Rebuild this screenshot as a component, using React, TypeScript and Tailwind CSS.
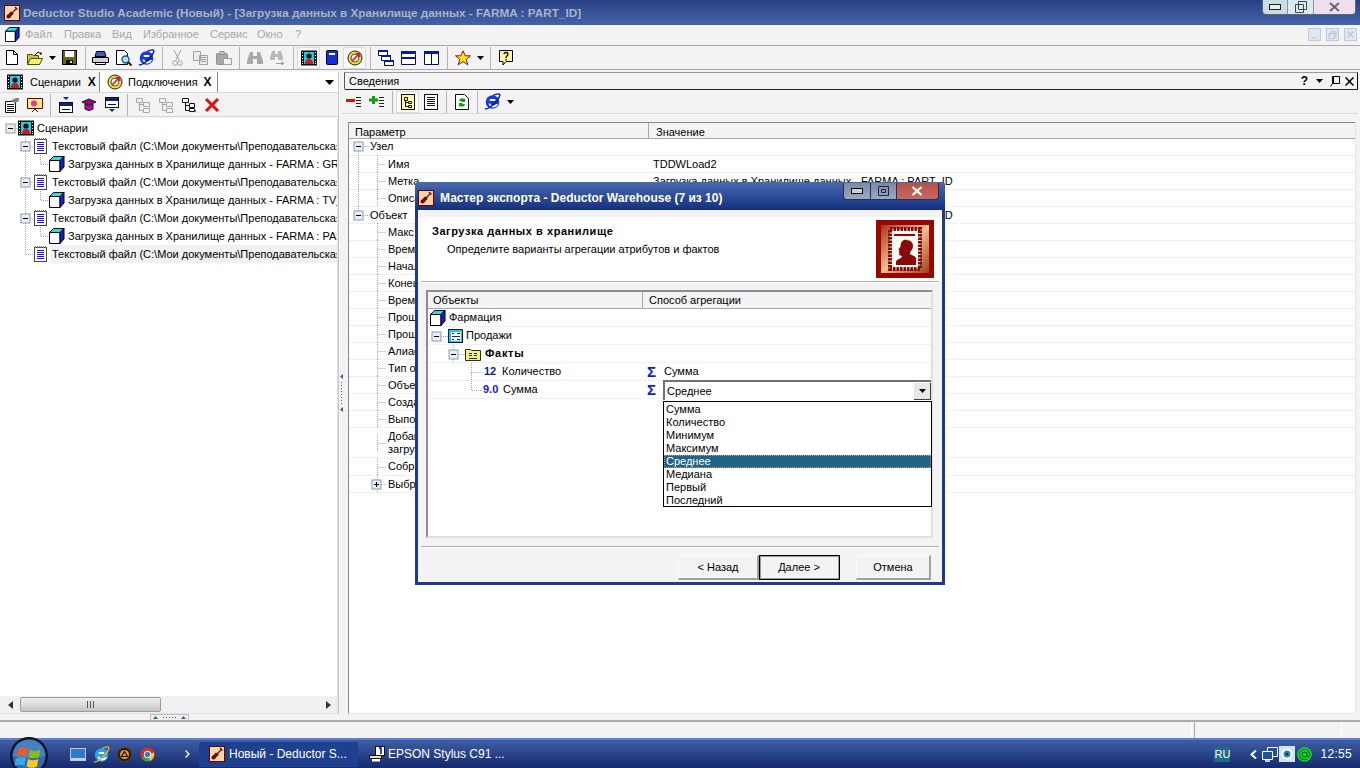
import React from "react";

type P = { s?: number };

const Cube = ({ s = 16 }: P) => (
  <svg width={s} height={s} viewBox="0 0 16 16" className="shrink-0">
    <path d="M.5 4.500h10.500v11H.5z" fill="#fff" stroke="#000" />
    <path d="M.5 4.500L4.500.5H15L11 4.500z" fill="#19e3f0" stroke="#000" />
    <path d="M11 4.500L15 .5v10.500l-4 4.500z" fill="#1020e0" stroke="#000" />
  </svg>
);
const Txt = () => (
  <svg width="14" height="16" viewBox="0 0 14 16" className="shrink-0">
    <rect x=".5" y="1.500" width="12" height="14" fill="#fff" stroke="#444" />
    <path d="M1.500 0v2M3.500 0v2M5.500 0v2M7.500 0v2M9.500 0v2M11.500 0v2" stroke="#777" />
    <path d="M3 4.500h7M3 6.500h7M3 8.500h7M3 10.500h7M3 12.500h7" stroke="#1010ff" />
  </svg>
);
const Film = ({ s = 16 }: P) => (
  <svg width={s} height={s} viewBox="0 0 16 16" className="shrink-0">
    <rect width="16" height="15" y=".5" fill="#111" />
    <path d="M1 2.500h1M1 5.500h1M1 8.500h1M1 11.500h1M1 13.500h1M14 2.500h1M14 5.500h1M14 8.500h1M14 11.500h1M14 13.500h1" stroke="#fff" />
    <rect x="3" y="2" width="10" height="12" fill="#14d4e8" />
    <circle cx="8" cy="6" r="2.600" fill="#000" />
    <path d="M4 14c0-4 2-5 4-5s4 1 4 5z" fill="#d81818" />
  </svg>
);
const Conn = () => (
  <svg width="16" height="16" viewBox="0 0 16 16" className="shrink-0">
    <circle cx="8" cy="8" r="7" fill="#f4e020" stroke="#222" />
    <circle cx="8" cy="8" r="4" fill="#f8f4c8" stroke="#3050c0" />
    <path d="M5 11l7-7M9 3.500h3.500V7" stroke="#e02020" strokeWidth="1.700" fill="none" />
  </svg>
);
const IE = ({ ring = "#0818a0", ball = "#1838e8" }: { ring?: string; ball?: string }) => (
  <svg width="17" height="17" viewBox="0 0 17 17" className="shrink-0">
    <circle cx="8.500" cy="9" r="6.800" fill={ball} />
    <rect x="5.500" y="6" width="6" height="2" rx="1" fill="#fff" />
    <path d="M4.500 10.500h1.500q1 2 3 2t3-1.500h2q-1.500 3.500-5 3.500t-4.500-4z" fill="#fff" />
    <path d="M1 15.500c2 2 13-6 15-13.500-1-2-5-.5-7 .5" fill="none" stroke={ring} strokeWidth="1.300" />
  </svg>
);
const Arrow = () => (
  <svg width="7" height="4" viewBox="0 0 7 4" className="shrink-0">
    <path d="M0 0h7L3.500 4z" fill="#000" />
  </svg>
);
const I = ({ children, w = 16, h = 16 }: { children: React.ReactNode; w?: number; h?: number }) => (
  <svg width={w} height={h} viewBox={`0 0 ${w} ${h}`} className="shrink-0">
    {children}
  </svg>
);
const Btn = ({ children, on }: { children: React.ReactNode; on?: boolean }) => (
  <div className={`w-[23px] h-[22px] flex items-center justify-center shrink-0 ${on ? "bg-[#fafafa] border border-[#dcdcdc]" : ""}`}>{children}</div>
);
const Small = ({ children }: { children: React.ReactNode }) => (
  <div className="w-[12px] h-[22px] flex items-center justify-center shrink-0">{children}</div>
);
const Sep = () => (
  <div className="w-[8px] h-[22px] flex justify-center shrink-0">
    <div className="w-[1px] h-full bg-[#b4b4b4]" />
  </div>
);

const MainToolbar = () => (
  <div className="h-[24px] shrink-0 flex items-center border-b border-[#aaaaaa]">
    <Btn><I w={12} h={15}><path d="M.5.5h7l4 4v10H.5z" fill="#fff" stroke="#000" /><path d="M7.500.5v4h4" fill="none" stroke="#000" /></I></Btn>
    <Btn><I w={16} h={14}><path d="M.5 3.500h5l1 1h5v9H.5z" fill="#c8c840" stroke="#505000" /><path d="M.5 13.500l3-6h12l-3 6z" fill="#f8f070" stroke="#505000" /><path d="M8 4l3-3 3 2M14 1v3" fill="none" stroke="#000" /></I></Btn>
    <Small><Arrow /></Small>
    <Btn><I w={15} h={15}><rect x=".5" y=".5" width="14" height="14" fill="#686810" stroke="#000" /><rect x="3" y="1" width="9" height="6" fill="#fff" /><rect x="4" y="10" width="7" height="4" fill="#111" /><rect x="8" y="11" width="2" height="2" fill="#ddd" /></I></Btn>
    <Sep />
    <Btn><I w={17} h={15}><path d="M4.500 1.500h8l1.500 5H3z" fill="#3060c8" stroke="#000" /><path d="M.5 7.500h16v5H.5z" fill="#d0d0d0" stroke="#000" /><path d="M3.500 12.500h10v2h-10z" fill="#fff" stroke="#000" /></I></Btn>
    <Btn><I w={16} h={16}><path d="M.5.500h8l3 3v11H.5z" fill="#fff" stroke="#000" /><circle cx="9.500" cy="9.500" r="3.500" fill="#b8e0e8" stroke="#0060a0" strokeWidth="1.400" /><path d="M12 12l3.500 3.500" stroke="#600000" strokeWidth="2" /></I></Btn>
    <Btn><IE /></Btn>
    <Sep />
    <Btn><I w={11} h={16}><path d="M2 0l5 10M9 0L4 10" stroke="#a0a0a0" /><circle cx="3" cy="13" r="2.300" fill="none" stroke="#a0a0a0" /><circle cx="8" cy="13" r="2.300" fill="none" stroke="#a0a0a0" /></I></Btn>
    <Btn><I w={15} h={14}><path d="M.5.5h7v9H.5zM6.500 4.500h8v9h-8z" fill="#ececec" stroke="#a0a0a0" /><path d="M8 6.500h5M8 8.500h5M8 10.500h5" stroke="#a0a0a0" /></I></Btn>
    <Btn><I w={16} h={14}><rect x=".5" y="2.500" width="11" height="11" rx="1" fill="#a8a8a8" stroke="#909090" /><rect x="4" y=".5" width="4" height="3" fill="#d0d0d0" stroke="#909090" /><path d="M7.500 7.500h8v6h-8z" fill="#f0f0f0" stroke="#a0a0a0" /></I></Btn>
    <Sep />
    <Btn><I w={16} h={14}><path d="M3 1h3v4h4V1h3l3 9v3h-6V8H6v5H0v-3z" fill="#a8a8a8" /></I></Btn>
    <Btn><I w={17} h={14}><path d="M3 0h3v3h3V0h3l2 7v2H9V6H6v3H1V7z" fill="#b8b8b8" /><path d="M7 12.500h7M12 10.500l3 2-3 1.500" stroke="#a0a0a0" fill="none" /></I></Btn>
    <Sep />
    <Btn on><Film /></Btn>
    <Btn><I w={12} h={15}><rect x=".5" y=".5" width="11" height="14" rx="1" fill="#1030e0" stroke="#000" /><rect x="3" y="3" width="6" height="2" fill="#fff" /></I></Btn>
    <Btn on><Conn /></Btn>
    <Sep />
    <Btn><I w={16} h={16}><path d="M.5.5h9v5h-9zM3.500 5.500h9v5h-9zM6.500 10.500h9v5h-9z" fill="#fff" stroke="#0a0a6a" /><path d="M0 0h10v2H0zM3 5h10v2H3zM6 10h10v2H6z" fill="#0818a0" /></I></Btn>
    <Btn><I w={15} h={14}><path d="M.5.5h14v13H.5z" fill="#fff" stroke="#0a0a6a" /><path d="M0 0h15v3H0zM0 6h15v2H0z" fill="#0818a0" /></I></Btn>
    <Btn><I w={15} h={14}><path d="M.5.5h14v13H.5zM7.500 1v13" fill="#fff" stroke="#0a0a6a" /><path d="M0 0h15v3H0z" fill="#0818a0" /></I></Btn>
    <Sep />
    <Btn><I w={16} h={16}><path d="M8 .8l2.200 5h5.300l-4.300 3.500 1.600 5.500L8 11.600l-4.800 3.200 1.600-5.500L.5 5.800h5.300z" fill="#f8e820" stroke="#a01010" /></I></Btn>
    <Small><Arrow /></Small>
    <Sep />
    <Btn><I w={14} h={16}><path d="M.5.5h13v11H7l-3 3.500v-3.500H.5z" fill="#fff8a0" stroke="#000" /><path d="M5 4c0-2 4-2 4 0s-2 1.500-2 4M7 9v1.500" fill="none" stroke="#000" strokeWidth="1.300" /></I></Btn>
  </div>
);

const dots = "#a8a8a8";
const Exp = ({ x, y = 9, plus }: { x: number; y?: number; plus?: boolean }) => (
  <g>
    <rect x={x - 4.5} y={y - 4.5} width="9" height="9" fill="#e8eef4" stroke="#8a9cb0" />
    <path d={`M${x - 2.5} ${y}h5`} stroke="#000" />
    {plus && <path d={`M${x} ${y - 2.5}v5`} stroke="#000" />}
  </g>
);
const Lines = ({ w, d, h = 18, children }: { w: number; d: string; h?: number; children?: React.ReactNode }) => (
  <svg width={w} height={h} viewBox={`0 0 ${w} ${h}`} className="shrink-0">
    <path d={d} stroke={dots} strokeDasharray="1 1" fill="none" />
    {children}
  </svg>
);

const ScenarioTree = () => {
  const file = (last: boolean, ex: boolean, hl?: boolean) => (
    <div className="flex items-center h-[18px]">
      <Lines w={33} d={last ? "M25.500 0v9.500H33" : "M25.500 0v18M25.500 9.500H33"}>{ex && <Exp x={25.500} y={9.500} />}</Lines>
      <div className="ml-[1px]"><Txt /></div>
      <div className={`ml-[3px] pl-[1px] flex-1 overflow-hidden whitespace-nowrap leading-[18px] ${hl ? "bg-[#f1f1f1]" : ""}`}>Текстовый файл (C:\Мои документы\Преподавательская\ФАРМАЦИЯ\данные.txt)</div>
    </div>
  );
  const load = (t: string) => (
    <div className="flex items-center h-[18px]">
      <Lines w={48} d="M25.500 0v18M40.500 0v9.500H48" />
      <div className="ml-[1px]"><Cube /></div>
      <div className="ml-[3px] whitespace-nowrap">Загрузка данных в Хранилище данных - FARMA : {t}</div>
    </div>
  );
  return (
    <div className="flex-1 bg-white overflow-hidden pt-[1px]">
      <div className="flex items-center h-[18px]">
        <Lines w={18} d="M10.500 9.500H18"><Exp x={10.500} y={9.500} /></Lines>
        <Film />
        <div className="ml-[3px]">Сценарии</div>
      </div>
      {file(false, true)}
      {load("GROUP_ID")}
      {file(false, true)}
      {load("TV_ID")}
      {file(false, true)}
      {load("PART_ID")}
      {file(true, false, true)}
    </div>
  );
};

const rows: { t: string; v?: string; kind?: string; tall?: boolean; big?: boolean }[] = [
  { t: "Имя", v: "TDDWLoad2" },
  { t: "Метка", v: "Загрузка данных в Хранилище данных - FARMA : PART_ID" },
  { t: "Описание" },
  { t: "Объект", kind: "root", v: "Загрузка данных в Хранилище данных - FARMA : PART_ID" },
  { t: "Макс" }, { t: "Время" }, { t: "Начало" }, { t: "Конец" }, { t: "Время" }, { t: "Прошло" }, { t: "Прошло" },
  { t: "Алиас" }, { t: "Тип о" }, { t: "Объект" }, { t: "Создан" }, { t: "Выполн" },
  { t: "Добав", tall: true }, { t: "Собрать", big: true }, { t: "Выбр", kind: "plus" },
];

const InfoTable = () => (
  <div className="flex-1 bg-white border border-[#8a8a8a] border-b-[#e4e4e4] border-r-[#e4e4e4] overflow-hidden">
    <div className="h-[16px] flex bg-[#f3f3f3] border-b border-[#a8a8a8] leading-[18px]">
      <div className="w-[300px] pl-[6px] border-r border-[#a8a8a8]">Параметр</div>
      <div className="pl-[7px]">Значение</div>
    </div>
    <div className="flex items-center h-[17px] pb-[2px] border-b border-dotted border-[#e6e6e6]">
      <Lines w={21} h={15} d="M9.500 7.500H21M9.500 7.500V15"><Exp x={9.500} y={7.500} /></Lines>
      <div>Узел</div>
    </div>
    {rows.map((r, i) =>
      r.kind === "root" ? (
        <div key={i} className="flex items-center h-[17px] border-b border-dotted border-[#e6e6e6]">
          <Lines w={21} d="M9.500 0v9.500H21"><Exp x={9.500} y={9.500} /></Lines>
          <div className="w-[283px]">{r.t}</div>
          <div className="whitespace-nowrap">{r.v}</div>
        </div>
      ) : (
        <div key={i} className={`flex items-center border-b border-dotted border-[#e6e6e6] ${r.tall ? "h-[30px]" : r.big ? "h-[18px]" : "h-[17px]"}`}>
          <Lines w={39} d={`${i < 3 ? "M9.500 0v18" : ""} M28.500 0v18 M28.500 9.500H37`}>{r.kind === "plus" && <Exp x={27.500} y={9.500} plus />}</Lines>
          <div className="w-[265px] leading-[13px]">
            {r.t}
            {r.tall && <div>загрузки</div>}
          </div>
          <div className="whitespace-nowrap">{r.v}</div>
        </div>
      )
    )}
  </div>
);

const Scrollbar = () => (
  <div className="h-[17px] shrink-0 bg-[#f0f0f0] flex items-center">
    <div className="w-[20px] flex justify-center">
      <svg width="5" height="8" viewBox="0 0 5 8"><path d="M5 0v8L0 4z" fill="#333" /></svg>
    </div>
    <div className="w-[141px] h-[15px] rounded-[2px] border border-[#9c9c9c] bg-gradient-to-b from-[#f0f0f0] via-[#dcdcdc] to-[#c4c4c4] flex items-center justify-center">
      <svg width="8" height="7" viewBox="0 0 8 7"><path d="M.5 0v7M3.500 0v7M6.500 0v7" stroke="#555" /></svg>
    </div>
    <div className="flex-1" />
    <div className="w-[18px] flex justify-center">
      <svg width="5" height="8" viewBox="0 0 5 8"><path d="M0 0v8l5-4z" fill="#333" /></svg>
    </div>
  </div>
);

const CapBtn = ({ w, c, children }: { w: number; c: string; children: React.ReactNode }) => (
  <div className={`h-full flex items-center justify-center ${c}`} style={{ width: w }}>{children}</div>
);

const Violin = () => (
  <svg width="16" height="16" viewBox="0 0 16 16" className="shrink-0">
    <rect x=".5" y=".5" width="15" height="15" fill="#f4d8a8" stroke="#700000" />
    <path d="M2.500 11.500c0-2 2.500-2 3-3.500s2.500-1.500 3.500-.5 .5 2-1 3-1 2-2 2.500-3.500 1-3.500-1.500z" fill="#700808" />
    <path d="M8 8l5-5M11 2l2.500 2.500" stroke="#700808" strokeWidth="1.200" />
  </svg>
);

const Stamp = () => (
  <div className="ml-auto mr-[8px] mt-[3px] w-[58px] h-[58px] bg-gradient-to-br from-[#a83018] via-[#ecc090] to-[#a04010] border-[5px] border-[#9a0606] flex items-center justify-center">
    <svg width="34" height="44" viewBox="0 0 34 44">
      <rect x="2" y="2" width="30" height="40" fill="#fffaf4" stroke="#8a0808" strokeWidth="4" strokeDasharray="2.500 1" />
      <rect x="6" y="7" width="21" height="2" fill="#8a0808" />
      <path d="M18 13c5 0 7 3 7 6 0 4-3 5-3 7 0 3 5 2 6 5v7H8v-3c0-3 6-3 6-6l-3-1 .5-2-1-1 1-1-1-1.500 2-3c0-4 2-7 6-7z" fill="#8a0808" />
    </svg>
  </div>
);

const Dialog = () => (
  <div className="absolute left-[415px] top-[182px] w-[530px] h-[403px] border-[3px] border-t-0 border-[#1f3a8c] bg-[#f3f3f3] flex flex-col rounded-t-[4px]">
    <div className="h-[28px] -mx-[3px] rounded-t-[4px] bg-gradient-to-b from-[#4a6ab0] to-[#14307e] flex items-center pl-[3px] pt-[3px] shrink-0">
      <Violin />
      <div className="ml-[6px] text-white font-bold text-[12px] whitespace-nowrap">Мастер экспорта - Deductor Warehouse (7 из 10)</div>
      <div className="ml-auto mr-[6px] self-start -mt-[2px] flex h-[17px] w-[96px] rounded-b-[4px] overflow-hidden border border-t-0 border-[#26304e]">
        <CapBtn w={27} c="bg-gradient-to-b from-[#7c8aa4] to-[#9aa8c0]">
          <svg width="12" height="6" viewBox="0 0 12 6"><rect x=".5" y=".5" width="11" height="5" fill="#c8d0dc" stroke="#111" /></svg>
        </CapBtn>
        <CapBtn w={27} c="bg-gradient-to-b from-[#7c8aa4] to-[#9aa8c0] border-x border-[#26304e]">
          <svg width="11" height="10" viewBox="0 0 11 10"><path d="M.5.5h10v9H.5zM3.500 3.500h4v3h-4z" fill="none" stroke="#1c2640" /></svg>
        </CapBtn>
        <CapBtn w={42} c="bg-gradient-to-b from-[#b85048] to-[#c46a60]">
          <svg width="12" height="10" viewBox="0 0 12 10"><path d="M1.500 1l9 8M10.500 1l-9 8" stroke="#fff" strokeWidth="2.200" /></svg>
        </CapBtn>
      </div>
    </div>
    <div className="h-[7px] shrink-0" />
    <div className="h-[64px] bg-white flex shrink-0">
      <div className="pl-[14px] pt-[6px]">
        <div className="font-bold tracking-[0.55px]">Загрузка данных в хранилище</div>
        <div className="pl-[15px] mt-[1px]">Определите варианты агрегации атрибутов и фактов</div>
      </div>
      <Stamp />
    </div>
    <div className="h-[1px] mx-[3px] bg-[#b0b0b0] shrink-0" />
    <div className="h-[1px] mx-[3px] bg-white shrink-0" />
    <div className="h-[7px] shrink-0" />
    <div className="ml-[8px] w-[507px] h-[248px] bg-white border-2 border-[#8c8c8c] border-b-[#e0e0e0] border-r-[#e0e0e0] shrink-0 relative">
      <div className="h-[17px] flex bg-[#f3f3f3] border-b border-[#a8a8a8] leading-[17px]">
        <div className="w-[215px] pl-[5px] border-r border-[#a8a8a8]">Объекты</div>
        <div className="pl-[6px]">Способ агрегации</div>
      </div>
      <div className="h-[18px] flex items-center border-b border-dotted border-[#e8e8e8] pl-[2px]">
        <Cube />
        <div className="ml-[3px]">Фармация</div>
      </div>
      <div className="h-[18px] flex items-center border-b border-dotted border-[#e8e8e8]">
        <Lines w={20} d="M9 9.500H20"><Exp x={8.500} y={9.500} /></Lines>
        <svg width="15" height="14" viewBox="0 0 15 14" className="shrink-0">
          <rect x=".5" y=".5" width="14" height="13" fill="#20c8d8" stroke="#002060" />
          <rect x="3" y="3" width="10" height="9" fill="#fff" />
          <path d="M4 4.500h2M9 4.500h3M4 7.500h8M4 10.500h2M9 10.500h3" stroke="#1020c0" />
        </svg>
        <div className="ml-[3px]">Продажи</div>
      </div>
      <div className="h-[18px] flex items-center border-b border-dotted border-[#e8e8e8]">
        <Lines w={37} d="M25.500 0v18M25.500 9.500H37"><Exp x={25.500} y={9.500} /></Lines>
        <svg width="16" height="14" viewBox="0 0 16 14" className="shrink-0">
          <path d="M.5 2.500h5l1 1h9v10H.5z" fill="#f8f070" stroke="#303000" />
          <path d="M4 6.500h3M9 6.500h3M4 8.500h3M9 8.500h3M4 11.500h8" stroke="#1020c0" />
        </svg>
        <div className="ml-[4px] font-bold tracking-[0.7px]">Факты</div>
      </div>
      <div className="h-[18px] flex items-center border-b border-dotted border-[#e8e8e8]">
        <Lines w={56} d="M43.500 0v18M43.500 9.500H54" />
        <div className="w-[18px] font-bold text-[#0a1a9a]">12</div>
        <div className="w-[143px]">Количество</div>
        <div className="w-[17px] ml-[2px] text-[#1414e0] font-bold text-[15px] leading-none">Σ</div>
        <div>Сумма</div>
      </div>
      <div className="h-[18px] flex items-center border-b border-dotted border-[#e8e8e8]">
        <Lines w={55} d="M43.500 0v9.500H54" />
        <div className="font-bold text-[#1414e0] w-[20px]">9.0</div>
        <div className="w-[142px]">Сумма</div>
        <div className="w-[16px] ml-[2px] text-[#1414e0] font-bold text-[15px] leading-none">Σ</div>
      </div>
      <div className="absolute left-[235px] top-[88px] w-[268px] h-[20px] bg-white border-l-2 border-t-2 border-[#707070] flex items-center pl-[2px]">
        Среднее
        <div className="ml-auto w-[17px] h-[17px] bg-[#e8e8e8] border-r border-b border-[#404040] flex items-center justify-center">
          <Arrow />
        </div>
      </div>
      <div className="absolute left-[235px] top-[109px] w-[269px] h-[106px] bg-white border border-black pt-[1px]">
        {["Сумма", "Количество", "Минимум", "Максимум", "Среднее", "Медиана", "Первый", "Последний"].map((t) => (
          <div key={t} className={`h-[13px] leading-[13px] pl-[2px] ${t === "Среднее" ? "bg-[#1f6587] text-white outline-1 -outline-offset-1 outline-dotted outline-[#d89060]" : ""}`}>{t}</div>
        ))}
      </div>
    </div>
    <div className="h-[8px] shrink-0" />
    <div className="h-[1px] mx-[3px] bg-[#b0b0b0] shrink-0" />
    <div className="h-[1px] mx-[3px] bg-white shrink-0" />
    <div className="flex pl-[260px] pt-[7px]">
      <DlgBtn w={81}>&lt; Назад</DlgBtn>
      <DlgBtn w={81} def>Далее &gt;</DlgBtn>
      <div className="w-[16px]" />
      <DlgBtn w={75}>Отмена</DlgBtn>
    </div>
  </div>
);

const DlgBtn = ({ w, def, children }: { w: number; def?: boolean; children: React.ReactNode }) => (
  <div
    className={`h-[25px] flex items-center justify-center bg-[#f3f3f3] border-t border-l border-r-2 border-b-2 ${def ? "border-black outline-1 -outline-offset-2 outline-[#9a9a9a]" : "border-t-[#fafafa] border-l-[#fafafa] border-r-[#a0a0a0] border-b-[#a0a0a0]"}`}
    style={{ width: w }}
  >
    {children}
  </div>
);

const Taskbar = () => (
  <div className="h-[30px] shrink-0 border-t-2 border-[#5b80d8] bg-gradient-to-b from-[#3f5ea4] to-[#17296e] flex items-center text-white text-[12px]">
    <div className="w-[10px] shrink-0" />
    <svg width="38" height="38" viewBox="0 0 38 38" className="shrink-0 self-start -mt-[3px]">
      <circle cx="19" cy="19" r="19" fill="#0a1228" />
      <circle cx="19" cy="19" r="16.500" fill="#2a6ab0" />
      <path d="M2.500 19a16.500 16.500 0 0 1 33 0q-16 5-33 0z" fill="#5c94cc" opacity=".55" />
      <path d="M8 12q5-3 10 0l-1.500 7.500q-5-2.500-10 0z" fill="#f0582a" />
      <path d="M20 12.500q5 3 10.500 0L29 20q-5 2.500-10.500 0z" fill="#86bc20" />
      <path d="M6 21.500q5-2.500 10 0L14.500 29q-5-2.500-10 0z" fill="#38a8e8" />
      <path d="M18 22q5 2.500 10.500 0L27 29.500q-5 2.500-10.500 0z" fill="#fcc820" />
    </svg>
    <div className="w-[22px] shrink-0" />
    <svg width="16" height="13" viewBox="0 0 16 13" className="shrink-0">
      <rect x=".5" y=".5" width="15" height="12" fill="#3078c8" stroke="#c0c8d8" />
      <rect x="1" y="10" width="14" height="2" fill="#c8d0d8" />
    </svg>
    <div className="w-[7px] shrink-0" />
    <IE ball="#28a0e8" ring="#f0b020" />
    <div className="w-[7px] shrink-0" />
    <svg width="15" height="15" viewBox="0 0 15 15" className="shrink-0">
      <circle cx="7.500" cy="7.500" r="7" fill="#2a1a08" stroke="#604010" />
      <circle cx="7.500" cy="7.500" r="4.500" fill="#e8a020" />
      <path d="M7.500 4.500l3 5h-6z" fill="none" stroke="#111" strokeWidth="1.200" />
    </svg>
    <div className="w-[8px] shrink-0" />
    <svg width="15" height="15" viewBox="0 0 15 15" className="shrink-0">
      <circle cx="7.500" cy="7.500" r="7" fill="#d83020" />
      <path d="M7.500 7.500L1.500 11a7 7 0 0 0 9.500 2.500z" fill="#38a038" />
      <path d="M7.500 7.500L14 5.500A7 7 0 0 1 10 14z" fill="#f0c820" />
      <circle cx="7.500" cy="7.500" r="3.300" fill="#3878d8" stroke="#fff" />
    </svg>
    <svg width="5" height="8" viewBox="0 0 5 8" className="ml-[30px] shrink-0"><path d="M.5.5L4 4 .5 7.500" fill="none" stroke="#fff" strokeWidth="1.300" /></svg>
    <div className="w-[9px] shrink-0" />
    <div className="w-[159px] h-[25px] rounded-[2px] bg-[#1f3f8f] flex items-center pl-[10px] whitespace-nowrap">
      <Violin />
      <div className="ml-[4px]">Новый - Deductor S...</div>
    </div>
    <div className="w-[11px] shrink-0" />
    <svg width="16" height="16" viewBox="0 0 16 16" className="shrink-0">
      <rect x="6.500" y=".5" width="9" height="9" fill="#fff" stroke="#111" />
      <path d="M10 2h2v6" stroke="#0000c0" fill="none" strokeWidth="1.500" />
      <path d="M.5 9.500h12v3H.5z" fill="#e0e0e0" stroke="#111" />
      <rect x="3" y="13" width="8" height="2.500" fill="#fff" />
    </svg>
    <div className="ml-[3px] whitespace-nowrap">EPSON Stylus C91 ...</div>
    <div className="ml-auto flex items-center h-full">
      <div className="w-[16px] h-[15px] bg-[#1e6a8a] text-[11px] leading-[15px] text-center">RU</div>
      <svg width="7" height="9" viewBox="0 0 7 9" className="ml-[20px]"><path d="M6 .5L1.500 4.500 6 8.500" fill="none" stroke="#fff" strokeWidth="2" /></svg>
      <svg width="16" height="15" viewBox="0 0 16 15" className="ml-[5px]">
        <path d="M5.500.5h10v9h-10z" fill="#2050a0" stroke="#fff" />
        <path d="M.5 4.500h10v8h-10z" fill="#2050a0" stroke="#fff" />
        <path d="M3 14h5" stroke="#fff" strokeWidth="1.500" />
      </svg>
      <div className="ml-[1px] w-[16px] h-[16px] bg-[#d0e4ec] flex items-center justify-center">
        <svg width="12" height="12" viewBox="0 0 12 12"><circle cx="6" cy="6" r="5.500" fill="#fff" /><circle cx="6" cy="6" r="3.500" fill="#1a90b0" /><circle cx="6" cy="6" r="1.300" fill="#0a2030" /></svg>
      </div>
      <svg width="15" height="15" viewBox="0 0 15 15" className="ml-[2px]">
        <circle cx="7.500" cy="7.500" r="7.300" fill="#10e010" />
        <circle cx="7.500" cy="7.500" r="2.400" fill="none" stroke="#065" strokeWidth="1.100" />
        <path d="M9.900 5v3.500c0 2 2.900 2 2.900-1 0-3-2.200-5.200-5.300-5.200a5.200 5.200 0 1 0 3 9.400" fill="none" stroke="#065" strokeWidth="1.100" />
      </svg>
      <div className="ml-[8px] mr-[8px] text-[12px] tracking-[0.3px]">12:55</div>
    </div>
  </div>
);

export default function App() {
  return (
    <div className="w-[1360px] h-[768px] relative overflow-hidden flex flex-col bg-[#f3f3f3] text-black text-[11px] font-['Liberation_Sans',sans-serif]">
      <div className="h-[25px] shrink-0 bg-gradient-to-b from-[#294184] to-[#4464a8] flex items-center pl-[4px]">
        <Violin />
        <div className="ml-[3px] text-[11.75px] font-bold text-[#aab2c8] whitespace-nowrap">Deductor Studio Academic (Новый) - [Загрузка данных в Хранилище данных - FARMA : PART_ID]</div>
        <div className="ml-auto mr-[4px] self-start flex h-[15px] w-[94px] rounded-b-[4px] overflow-hidden border border-t-0 border-[#5a6484]">
          <CapBtn w={25} c="bg-[#c8dce2]"><svg width="12" height="6" viewBox="0 0 12 6"><rect x=".5" y=".5" width="11" height="5" fill="#e8eef0" stroke="#222" /></svg></CapBtn>
          <CapBtn w={27} c="bg-[#dce9ef] border-x border-[#8a94a8]"><svg width="12" height="12" viewBox="0 0 12 12"><path d="M3.500.5h8v8h-8zM.5 3.500h8v8h-8z" fill="#dce9ef" stroke="#444" /></svg></CapBtn>
          <CapBtn w={42} c="bg-[#efdfeb]"><svg width="11" height="10" viewBox="0 0 11 10"><path d="M1 1l9 8M10 1l-9 8" stroke="#706078" strokeWidth="2" /></svg></CapBtn>
        </div>
      </div>
      <div className="h-[21px] shrink-0 flex items-center border-b border-[#aaaaaa] text-[#a8a8a8] pl-[5px] pb-[1px]">
        <Cube s={15} />
        <div className="ml-[5px] w-[39px]">Файл</div>
        <div className="w-[48px]">Правка</div>
        <div className="w-[31px]">Вид</div>
        <div className="w-[67px]">Избранное</div>
        <div className="w-[47px]">Сервис</div>
        <div className="w-[38px]">Окно</div>
        <div>?</div>
        <div className="ml-auto flex gap-[5px] pr-[3px]">
          {[
            "M3 10.500h6",
            "M2.500 5.500h6v6h-6zM4.500 5V3.500h6v6H9",
            "M3 3l7 7M10 3l-7 7",
          ].map((d) => (
            <div key={d} className="w-[13px] h-[13px] bg-[#e2e8f0] border border-[#bccce0]">
              <svg width="11" height="11" viewBox="0 0 13 13"><path d={d} fill="none" stroke="#b8c8dc" strokeWidth="1.400" /></svg>
            </div>
          ))}
        </div>
      </div>
      <MainToolbar />
      <div className="flex-1 flex min-h-0 pt-[2px] pb-[6px] relative">
        <div className="w-[338px] shrink-0 flex flex-col">
          <div className="h-[21px] shrink-0 bg-white flex items-center border-b border-[#d8d8d8]">
            <div className="h-full w-[100px] bg-[#f3f3f3] flex items-center pl-[7px] border-r border-[#888] shrink-0">
              <Film />
              <div className="ml-[7px]">Сценарии</div>
              <div className="ml-[7px] font-bold text-[12px]">X</div>
            </div>
            <div className="h-full w-[118px] flex items-center pl-[7px] border-r border-[#888] shrink-0">
              <Conn />
              <div className="ml-[5px]">Подключения</div>
              <div className="ml-[6px] font-bold text-[12px]">X</div>
            </div>
            <div className="ml-auto mr-[4px]"><svg width="9" height="5" viewBox="0 0 9 5"><path d="M0 0h9L4.500 5z" fill="#000" /></svg></div>
          </div>
          <div className="h-[24px] shrink-0 flex items-center border-b border-[#d8d8d8]">
            <Btn><I><path d="M1.500 4.500h10v11h-10z" fill="#fff" stroke="#111" /><path d="M3 7.500h7M3 9.500h7M3 11.500h7M3 13.500h7" stroke="#111" /><path d="M6 4l6-3h3v3l-4 2z" fill="#808080" /></I></Btn>
            <Btn><I><path d="M.5 1.500h15v10H.5z" fill="#f8f070" stroke="#600" /><circle cx="7" cy="6.500" r="3" fill="#e830c0" /><path d="M5 15l3-3 3 3" stroke="#222" fill="none" /></I></Btn>
            <Sep />
            <Btn><I w={14} h={16}><path d="M4 0h6L7 3z" fill="#1020a0" /><rect x=".5" y="5.500" width="13" height="10" fill="#fff" stroke="#111" /><rect x="1" y="6" width="12" height="3" fill="#102080" /><path d="M3 12.500h8" stroke="#111" /></I></Btn>
            <Btn><I><path d="M8 2l7 3-7 3-7-3z" fill="#a00090" stroke="#111" /><path d="M4 7v5q4 3 8 0V7l-4 2z" fill="#d000b0" stroke="#111" /></I></Btn>
            <Btn><I w={14} h={16}><rect x=".5" y=".5" width="13" height="10" fill="#fff" stroke="#111" /><rect x="1" y="1" width="12" height="3" fill="#102080" /><path d="M3 7.500h8" stroke="#111" /><path d="M4 12h6l-3 3z" fill="#1020a0" /></I></Btn>
            <Sep />
            {[0, 1].map((k) => (
              <Btn key={k}><I><path d="M1.500 1.500h6v4h-6zM8.500 5.500h6v4h-6zM8.500 11.500h6v4h-6zM4.500 6v7.500h4M4.500 7.500h4" fill="none" stroke="#a8a8a8" /></I></Btn>
            ))}
            <Btn><I><path d="M1.500 1.500h6v4h-6zM8.500 6.500h5v4h-5zM8.500 11.500h5v3h-5z" fill="#fff" stroke="#111" /><path d="M4.500 6v7.500h4M4.500 8.500h4" fill="none" stroke="#111" /><path d="M13 12l2 2-2 1" stroke="#1060c0" fill="none" /></I></Btn>
            <Btn><I><path d="M2 2l12 12M14 2L2 14" stroke="#e01010" strokeWidth="3" /></I></Btn>
          </div>
          <div className="flex-1 flex flex-col min-h-0 border-r border-b border-[#e0e0e0] mt-[1px]">
            <ScenarioTree />
            <Scrollbar />
          </div>
        </div>
        <div className="w-[6px] shrink-0 flex items-center justify-center border-l border-[#c8c8c8]">
          <svg width="4" height="38" viewBox="0 0 4 38">
            <path d="M3 0v5L0 2.500zM3 33v5L0 35.500z" fill="#2a6a90" />
            <path d="M1.500 8v22" stroke="#2a6a90" strokeDasharray="1 2" />
          </svg>
        </div>
        <div className="flex-1 flex flex-col min-w-0 pr-[2px]">
          <div className="h-[18px] shrink-0 rounded-bl-[2px] border border-t-[#9a9a9a] border-b-[#222] border-r-black border-l-[#555] bg-[#f3f3f3] flex items-center pl-[4px]">
            <div>Сведения</div>
            <div className="ml-auto flex items-center">
              <div className="w-[15px] flex justify-center font-bold text-[12px]">?</div>
              <div className="w-[15px] flex justify-center"><Arrow /></div>
              <div className="w-[15px] flex justify-center"><svg width="10" height="11" viewBox="0 0 10 11"><path d="M2.500.5h7v7h-7zM.5 10.500l2-3M3.500 1v6" fill="none" stroke="#000" /></svg></div>
              <div className="w-[15px] flex justify-center"><svg width="9" height="9" viewBox="0 0 9 9"><path d="M.5.5l8 8M8.500.5l-8 8" stroke="#000" strokeWidth="1.500" /></svg></div>
            </div>
          </div>
          <div className="h-[24px] shrink-0 flex items-center -ml-[2px] border-b border-[#d8d8d8]">
            <Btn><I w={16} h={12}><rect x="0" y="3" width="9" height="3" fill="#e01010" /><path d="M10 1.500h5M10 4.500h5M10 7.500h5M10 10.500h5" stroke="#222" /></I></Btn>
            <Btn><I w={16} h={12}><path d="M0 4h9M4.500 0v8" stroke="#10a010" strokeWidth="3" /><path d="M10 1.500h5M10 4.500h5M10 7.500h5M10 10.500h5" stroke="#222" /></I></Btn>
            <Sep />
            <Btn on><I w={14} h={16}><rect x=".5" y=".5" width="13" height="15" fill="#fff8a0" stroke="#111" /><path d="M3.500 3.500h3v3h-3zM7.500 7.500h3v2h-3zM7.500 11.500h3v2h-3zM4.500 7v5.500h3M4.500 8.500h3" fill="none" stroke="#111" /></I></Btn>
            <Btn><I w={14} h={16}><rect x=".5" y=".5" width="13" height="15" fill="#fff" stroke="#111" /><path d="M3 3.500h8M3 5.500h8M3 7.500h8M3 9.500h8M3 11.500h8" stroke="#111" /></I></Btn>
            <Sep />
            <Btn><I w={14} h={16}><path d="M.5.5h9l4 4v11H.5z" fill="#fff" stroke="#111" /><path d="M4 7a3 3 0 0 1 5-2l1-1v4H6l1-1M10 10a3 3 0 0 1-5 2l-1 1V9h4l-1 1" fill="#10a010" /></I></Btn>
            <Sep />
            <Btn><IE /></Btn>
            <Small><Arrow /></Small>
          </div>
          <div className="flex-1 flex flex-col min-h-0 pl-[4px] pr-[2px] pt-[8px]">
            <InfoTable />
          </div>
        </div>
        <div className="absolute left-[150px] bottom-0 w-[39px] h-[6px] bg-[#eeeeee] border-x border-t border-[#c0c0c0] flex items-center justify-between px-[2px]">
          <svg width="5" height="3" viewBox="0 0 5 3"><path d="M2.500 0L5 3H0z" fill="#2a6a90" /></svg>
          <svg width="14" height="1" viewBox="0 0 14 1"><path d="M0 .5h14" stroke="#2a6a90" strokeDasharray="1 2" /></svg>
          <svg width="5" height="3" viewBox="0 0 5 3"><path d="M2.500 0L5 3H0z" fill="#2a6a90" /></svg>
        </div>
      </div>
      <div className="h-[18px] shrink-0 flex border-t-2 border-[#ababab]">
        <div className="w-[1192px] border-r border-white" />
        <div className="ml-[2px] w-[148px] border-l border-r border-[#ababab] border-r-white" />
      </div>
      <Taskbar />
      <Dialog />
    </div>
  );
}
